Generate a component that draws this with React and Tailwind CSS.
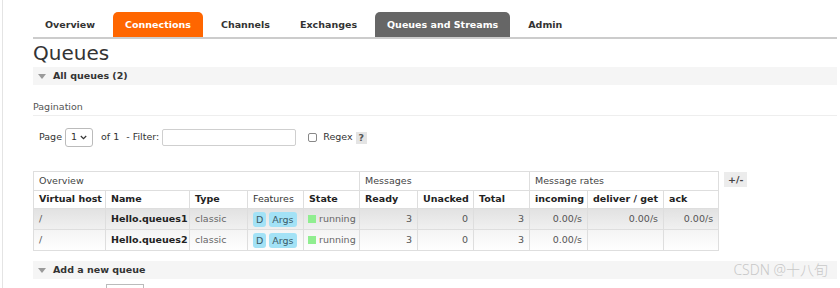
import React from "react"

const tabs = [
  { label: "Overview" },
  { label: "Connections", cls: "bg-[#ff6600] text-white" },
  { label: "Channels" },
  { label: "Exchanges" },
  { label: "Queues and Streams", cls: "bg-[#666666] text-white" },
  { label: "Admin" },
]

const cols = [
  { label: "Virtual host", w: "w-[72px]" },
  { label: "Name", w: "w-[84px]" },
  { label: "Type", w: "w-[58px]" },
  { label: "Features", w: "w-[56px]", normal: true },
  { label: "State", w: "w-[56px]" },
  { label: "Ready", w: "w-[58px]" },
  { label: "Unacked", w: "w-[56px]" },
  { label: "Total", w: "w-[56px]" },
  { label: "incoming", w: "w-[58px]" },
  { label: "deliver / get", w: "w-[76px]" },
  { label: "ack", w: "w-[55px]" },
]

const rows = [
  { name: "Hello.queues1", rates: ["0.00/s", "0.00/s", "0.00/s"], bg: "bg-gradient-to-b from-[#e2e2e2] to-[#f1f1f1]" },
  { name: "Hello.queues2", rates: ["0.00/s", "", ""], bg: "bg-gradient-to-b from-[#f4f4f4] to-white" },
]

const border = "border border-[#dedede] overflow-hidden whitespace-nowrap"
const cell = `${border} px-[5px]`

function SectionBar({ title }) {
  return (
    <div className="flex items-center h-[18px] bg-[#f5f5f5] pl-[5px] gap-[7px]">
      <span className="w-0 h-0 border-l-[4px] border-r-[4px] border-t-[5px] border-l-transparent border-r-transparent border-t-[#9a9a9a]" />
      <span className="font-bold text-[#333]">{title}</span>
    </div>
  )
}

export default function App() {
  return (
    <div
      className="w-[840px] h-[288px] overflow-hidden bg-white text-[9.5px] text-[#333]"
      style={{ fontFamily: '"DejaVu Sans", Verdana, sans-serif' }}
    >
      <div className="ml-[2px] h-full border-l border-[#e4e4e4] pl-[30px] pr-[3px]">
        {/* Tabs */}
        <div className="flex gap-[6px] pt-[12px] border-b-2 border-[#cccccc]">
          {tabs.map(t => (
            <div
              key={t.label}
              className={`h-[25px] px-[12px] pt-[1px] flex items-center font-bold rounded-t-[5px] ${t.cls || "text-[#333]"}`}
            >
              {t.label}
            </div>
          ))}
        </div>

        <h1 className="text-[20px] leading-[27px] text-[#333] pt-[1px]">Queues</h1>
        <SectionBar title="All queues (2)" />

        {/* Pagination */}
        <div className="mt-[16px] pb-[3px] border-b border-[#eeeeee] text-[#555] leading-[11px]">Pagination</div>

        <div className="flex items-center mt-[12px] pl-[6px] h-[19px] text-[#333]">
          <span>Page</span>
          <div className="ml-[3px] w-[28px] h-[19px] border border-[#bbb] rounded-[3px] flex items-center justify-between px-[5px]">
            <span>1</span>
            <svg width="7" height="5" viewBox="0 0 7 5"><path d="M0.8 1 L3.5 3.7 L6.2 1" fill="none" stroke="#333" strokeWidth="1.2" /></svg>
          </div>
          <span className="ml-[8px]">of 1</span>
          <span className="ml-[7px]">- Filter:</span>
          <div className="ml-[3px] w-[134px] h-[17px] border border-[#cfcfcf] rounded-[2px] bg-white" />
          <div className="ml-[12px] w-[9px] h-[9px] border border-[#888] rounded-[2px]" />
          <span className="ml-[6px]">Regex</span>
          <span className="ml-[3px] px-[3px] h-[12px] leading-[12px] bg-[#e4e4e4] font-bold text-[#555]">?</span>
        </div>

        {/* Table */}
        <div className="flex items-start mt-[24px]">
          <table className="table-fixed w-[685px] border-collapse border border-[#dedede]">
            <colgroup>
              {cols.map(c => <col key={c.label} className={c.w} />)}
            </colgroup>
            <thead>
              <tr className="h-[19px] text-[#444]">
                <th colSpan={5} className={`${cell} text-left font-normal`}>Overview</th>
                <th colSpan={3} className={`${cell} text-left font-normal`}>Messages</th>
                <th colSpan={3} className={`${cell} text-left font-normal`}>Message rates</th>
              </tr>
              <tr className="h-[18px]">
                {cols.map(c => (
                  <th key={c.label} className={`${cell} text-left ${c.normal ? "font-normal" : "font-bold text-[#222]"}`}>
                    {c.label}
                  </th>
                ))}
              </tr>
            </thead>
            <tbody>
              {rows.map(r => (
                <tr key={r.name} className={`h-[21px] ${r.bg}`}>
                  <td className={`${cell} text-[#555]`}>/</td>
                  <td className={`${cell} font-bold text-[#222]`}>{r.name}</td>
                  <td className={`${cell} text-[#666]`}>classic</td>
                  <td className={`${border} pl-[5px]`}>
                    <div className="flex gap-[3px]">
                      <span className="px-[3px] h-[15px] leading-[16px] rounded-[3px] bg-[#a3e2f6] text-[#3b5b66]">D</span>
                      <span className="px-[3px] h-[15px] leading-[16px] rounded-[3px] bg-[#a3e2f6] text-[#3b5b66]">Args</span>
                    </div>
                  </td>
                  <td className={`${border} pl-[4px]`}>
                    <div className="flex items-center gap-[3px] text-[#666]">
                      <span className="shrink-0 w-[8px] h-[8px] bg-[#90ee90]" />
                      <span>running</span>
                    </div>
                  </td>
                  <td className={`${cell} text-right text-[#555]`}>3</td>
                  <td className={`${cell} text-right text-[#555]`}>0</td>
                  <td className={`${cell} text-right text-[#555]`}>3</td>
                  {r.rates.map((v, i) => (
                    <td key={i} className={`${cell} text-right text-[#555]`}>{v}</td>
                  ))}
                </tr>
              ))}
            </tbody>
          </table>
          <div className="ml-[5px] mt-[1px] px-[4px] h-[15px] leading-[15px] bg-[#ececec] font-bold text-[#444]">+/-</div>
        </div>

        <div className="mt-[10px] relative">
          <SectionBar title="Add a new queue" />
          <span
            className="absolute right-[9px] top-[-1px] text-[14px] leading-[20px] text-[#c8c8c8] font-light"
            style={{ fontFamily: '"Noto Sans", "Noto Sans CJK SC", sans-serif' }}
          >
            CSDN @十八旬
          </span>
        </div>
        <div className="ml-[73px] mt-[5px] w-[38px] h-[4px] border-t border-x border-[#bbb]" />
      </div>
    </div>
  )
}
